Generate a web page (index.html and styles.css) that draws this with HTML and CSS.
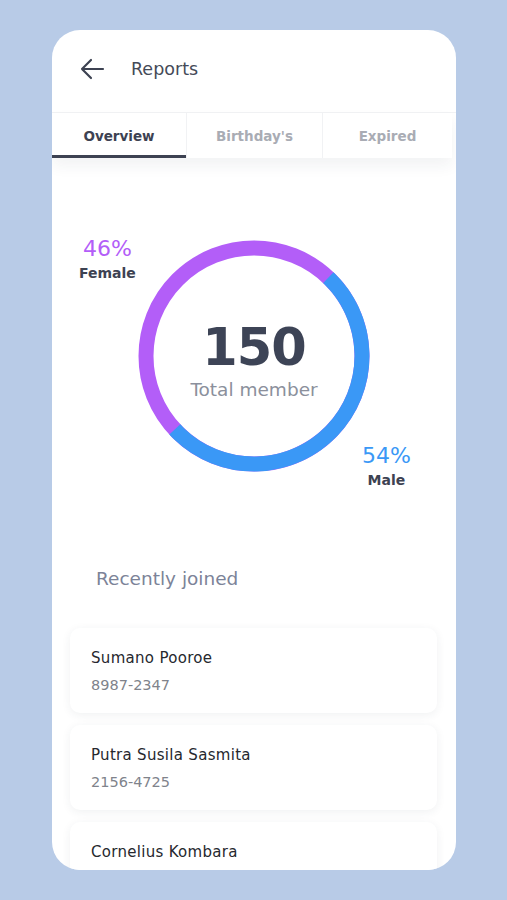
FILE: index.html
```html
<!DOCTYPE html>
<html lang="en">
<head>
  <meta charset="UTF-8">
  <meta name="viewport" content="width=device-width, initial-scale=1.0">
  <title>Reports</title>
  <link rel="stylesheet" href="styles.css">
</head>
<body>
  <div class="phone">
    <div class="header">
      <svg class="back" width="26" height="22" viewBox="0 0 26 22">
        <path d="M24 11H3M12 2L3 11l9 9" fill="none" stroke="#3d4252" stroke-width="2.2" stroke-linecap="round" stroke-linejoin="round"/>
      </svg>
      <span class="title">Reports</span>
    </div>

    <div class="tabs">
      <div class="tab active">Overview</div>
      <div class="tab">Birthday's</div>
      <div class="tab">Expired</div>
    </div>

    <div class="chart">
      <div class="label female">
        <div class="pct">46%</div>
        <div class="name">Female</div>
      </div>
      <div class="donut">
        <svg width="232" height="232" viewBox="0 0 232 232">
          <circle cx="116" cy="116" r="108" fill="none" stroke="#b35ef8" stroke-width="15"/>
          <circle cx="116" cy="116" r="108" fill="none" stroke="#3a98f6" stroke-width="15"
                  stroke-dasharray="346 400" transform="rotate(-46.5 116 116)"/>
        </svg>
        <div class="total">
          <div class="count">150</div>
          <div class="caption">Total member</div>
        </div>
      </div>
      <div class="label male">
        <div class="pct">54%</div>
        <div class="name">Male</div>
      </div>
    </div>

    <h3 class="section">Recently joined</h3>

    <div class="list">
      <div class="card">
        <div class="member">Sumano Pooroe</div>
        <div class="phone-no">8987-2347</div>
      </div>
      <div class="card">
        <div class="member">Putra Susila Sasmita</div>
        <div class="phone-no">2156-4725</div>
      </div>
      <div class="card">
        <div class="member">Cornelius Kombara</div>
      </div>
    </div>
  </div>
</body>
</html>
```

FILE: styles.css
```css
body {
  margin: 0;
  padding: 0;
  background-color: #b8cbe7;
  font-family: "DejaVu Sans", "Noto Sans", sans-serif;
  height: 900px;
  overflow: hidden;
}
.phone {
  margin: 30px 0 0 52px;
  width: 404px;
  height: 840px;
  background: #ffffff;
  border-radius: 28px;
  overflow: hidden;
}
.header {
  height: 82px;
  display: flex;
  align-items: center;
  padding-left: 27px;
  border-bottom: 1px solid #f1f2f4;
}
.back {
  display: block;
  margin-top: -4px;
}
.title {
  margin-left: 26px;
  margin-top: -4px;
  font-size: 17.5px;
  color: #454a58;
}
.tabs {
  width: 400px;
  height: 45px;
  display: grid;
  grid-template-columns: 134px 136px 130px;
  box-shadow: 0 8px 14px rgba(40, 50, 70, 0.06);
  position: relative;
}
.tab {
  display: flex;
  align-items: center;
  justify-content: center;
  font-size: 13.5px;
  font-weight: bold;
  color: #a9acb4;
  border-left: 1px solid #f1f2f4;
}
.tab:first-child {
  border-left: none;
}
.tab.active {
  color: #3d4252;
  border-bottom: 3px solid #3d4252;
  padding-top: 3px;
}
.chart {
  position: relative;
  height: 370px;
}
.donut {
  position: absolute;
  left: 86px;
  top: 82px;
  width: 232px;
  height: 232px;
}
.donut svg {
  display: block;
}
.total {
  position: absolute;
  left: 0;
  right: 0;
  top: 79px;
  text-align: center;
}
.count {
  font-size: 51px;
  font-weight: bold;
  color: #3d4456;
  line-height: 58px;
  letter-spacing: -1px;
}
.caption {
  font-size: 18.5px;
  color: #8b909c;
  margin-top: 2px;
}
.label {
  position: absolute;
  text-align: center;
}
.label .pct {
  font-size: 22px;
  line-height: 26px;
}
.label .name {
  font-size: 14px;
  font-weight: bold;
  color: #3d4252;
  margin-top: 3px;
}
.female {
  left: 27px;
  top: 78px;
}
.female .pct {
  color: #b35ef8;
}
.male {
  left: 310px;
  top: 285px;
}
.male .pct {
  color: #3a98f6;
}
.section {
  margin: 40px 0 0 44px;
  font-size: 18.5px;
  font-weight: normal;
  color: #7c8398;
}
.list {
  margin: 39px 0 0 18px;
  width: 367px;
  display: flex;
  flex-direction: column;
  gap: 12px;
}
.card {
  background: #ffffff;
  border-radius: 10px;
  box-shadow: 0 2px 10px rgba(40, 50, 70, 0.07);
  padding: 21px 21px 20px;
}
.member {
  font-size: 15px;
  color: #26282e;
  letter-spacing: 0.3px;
}
.phone-no {
  margin-top: 10px;
  font-size: 14.5px;
  color: #80838b;
}
```
